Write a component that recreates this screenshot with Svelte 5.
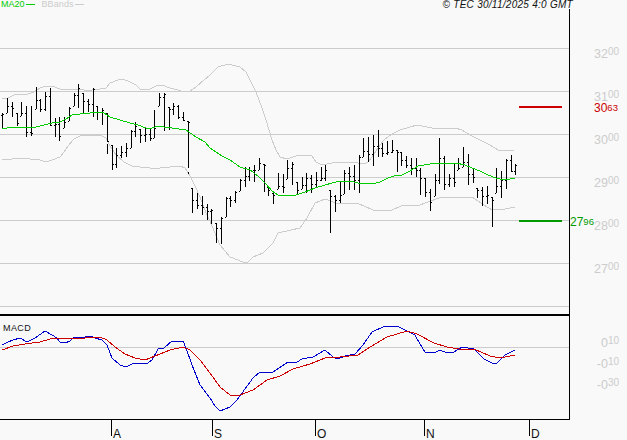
<script>
  // [high, low, close] in chart pixels, open is the previous close
  const bars = [
    [113,128,114],[98,113,106],[102,117,108],[113,126,123],[102,116,113],[106,137,132],[106,136,133],[87,109,100],[99,112,109],[92,111,96],
    [88,126,125],[118,137,124],[117,141,136],[117,128,122],[107,121,108],[93,106,95],[84,108,88],[93,113,101],[99,112,104],[88,117,89],
    [106,120,112],[108,125,110],[113,142,141],[145,170,164],[148,168,155],[146,158,152],[143,157,148],[130,148,131],[122,137,126],[129,143,135],
    [128,142,134],[129,141,138],[110,138,128],[93,106,97],[93,131,94],[107,130,109],[103,115,106],[105,119,117],[112,121,120],[121,168,122],
    [188,213,200],[193,209,205],[196,215,207],[204,220,211],[209,224,210],[223,243,228],[217,244,218],[197,217,198],[196,207,200],[191,203,192],
    [179,191,180],[167,187,176],[167,181,170],[165,182,170],[158,170,163],[164,192,165],[187,196,190],[193,204,195],[173,189,186],[174,193,187],
    [160,179,168],[162,185,164],[182,194,190],[177,189,185],[173,193,178],[175,193,184],[172,188,180],[167,181,178],[165,181,170],[190,233,196],
    [195,212,200],[182,203,195],[170,194,173],[167,190,176],[165,190,180],[155,193,157],[138,157,151],[137,162,154],[135,166,146],[130,157,148],
    [143,157,153],[141,155,152],[140,153,150],[150,172,152],[152,166,160],[156,168,165],[158,175,168],[158,177,170],[168,195,178],[178,197,192],
    [189,211,202],[174,196,180],[138,184,158],[156,190,184],[174,187,178],[164,187,182],[158,170,168],[147,167,162],[154,185,174],[168,183,177],
    [188,198,190],[187,206,196],[186,204,195],[197,227,200],[168,193,186],[171,198,180],[159,189,160],[155,172,171],[164,175,165]
  ];
  // broken-off pieces of stems: [x, top, bottom]
  const stubs = [[107, 144, 154], [188, 172, 174]];

  const priceGrid = [48, 91, 134, 177, 220, 263, 306];
  const priceLabels = [
    ['32', 58], ['31', 101], ['30', 144], ['29', 187], ['28', 230], ['27', 273]
  ];
  const macdLabels = [
    ['0', '10', 347], ['-0', '10', 368], ['-0', '30', 389]
  ];
  const months = [
    ['A', 111], ['S', 212], ['O', 315], ['N', 424], ['D', 529]
  ];

  const upper = '2,99 8,98 14,95 20,94 28,94 34,92 40,88 46,86 52,86 60,89 70,90 78,89 84,90 92,90 100,89 106,88 110,83 118,80 122,79 128,81 136,85 140,89 150,89 158,85 162,85 170,88 178,90 184,92 190,91 196,87 204,80 210,75 218,67 228,64 240,67 246,72 250,80 256,92 262,108 266,120 272,140 276,150 280,157 287,159 296,156 306,155 312,156 316,162 322,165 332,163 340,162 350,162 358,163 364,164 368,162 372,157 378,148 384,140 392,134 400,130 410,127 417,125 432,128 455,128 462,130 470,135 480,140 490,145 498,150 506,151 514,150';
  const lower = '2,159 12,159 20,158 30,159 40,160 46,162 52,160 60,157 64,152 68,146 74,139 80,136 90,135 100,135 106,138 110,146 116,155 124,162 132,166 140,167 150,168 160,168 170,167 180,166 185,168 190,176 196,188 202,202 206,213 210,221 217,238 220,245 230,257 243,262 248,262 253,257 263,253 273,243 278,233 300,228 307,218 315,203 325,199 338,204 357,203 373,210 390,211 403,205 417,206 439,198 460,197 472,197 484,205 492,210 505,209 515,207';
  const ma20 = '2,129 7,128 14,127 20,127 26,127 36,127 44,125 52,123 60,122 66,119 72,115 80,114 90,113 96,112 104,113 110,117 120,120 130,123 138,125 146,128 152,128 158,126 164,127 172,128 186,130 196,137 205,142 210,148 216,152 222,156 230,160 240,167 250,170 258,176 266,184 272,191 278,195 288,195 296,195 305,192 315,188 325,185 332,183 340,181 350,181 358,183 366,183 372,184 380,182 388,178 394,176 402,175 410,171 418,166 430,164 445,163 456,163 465,165 472,168 480,171 488,175 496,178 504,180 510,179 515,178';
  const macd = '2,345 8,342 13,340 20,338 27,342 35,338 45,331 52,335 57,338 60,342 65,343 70,341 74,337 85,337 90,336 95,338 102,340 107,345 112,358 120,365 126,367 134,363 148,363 152,360 158,349 164,348 172,341 183,341 186,348 192,365 200,385 210,398 215,406 220,411 230,407 237,400 253,378 260,372 273,372 282,366 288,362 297,362 302,359 313,357 325,350 333,357 338,359 345,356 355,354 363,345 372,332 385,326 397,326 407,331 415,335 417,339 425,352 434,353 440,350 447,353 454,352 462,347 474,349 484,359 492,363 497,363 505,355 515,350';
  const signal = '2,350 13,346 25,344 40,342 50,339 60,338 75,338 85,338 100,337 107,340 115,347 125,354 135,358 145,360 155,356 170,350 183,347 190,350 200,360 210,373 220,387 230,395 240,395 253,390 267,380 280,376 293,369 310,364 325,358 340,357 358,355 370,347 387,337 407,331 417,334 434,343 447,347 459,349 474,349 490,356 500,358 515,355';

  const barX = (i) => Math.round(2.3 + i * 4.75);
  const opens = bars.map((b, i) => {
    const prev = i ? bars[i - 1][2] : b[0] + 2;
    return Math.min(b[1], Math.max(b[0], prev));
  });
</script>

<div class="page">
  <header class="top">
    <div class="legend">
      <span class="ma">MA20</span><i class="swatch ma-line"></i>
      <span class="bb">BBands</span><i class="swatch bb-line"></i>
    </div>
    <div class="stamp">© TEC 30/11/2025 4:0 GMT</div>
  </header>

  <svg class="chart" width="627" height="431" viewBox="0 9 627 431">
    {#each priceGrid as y}
      <rect class="grid" x="0" {y} width="569" height="1" />
    {/each}
    <rect class="grid" x="0" y="347" width="569" height="1" />

    <polyline class="band" points={upper} />
    <polyline class="band" points={lower} />

    {#each bars as b, i}
      <rect class="bar" x={barX(i)} y={b[0]} width="1" height={b[1] - b[0]} />
      <rect class="bar" x={barX(i) - 1} y={opens[i]} width="1" height="1" />
      <rect class="bar" x={barX(i) + 1} y={b[2]} width="1" height="1" />
    {/each}
    {#each stubs as [x, top, bottom]}
      <rect class="bar" {x} y={top} width="1" height={bottom - top} />
    {/each}

    <polyline class="ma20" points={ma20} />

    <rect class="target-high" x="519" y="106" width="43" height="2" />
    <rect class="target-low" x="519" y="220" width="43" height="2" />

    <rect class="axis" x="0" y="314" width="569" height="2" />
    <rect class="axis" x="0" y="419" width="569" height="1" />
    <rect class="axis" x="569" y="9" width="1" height="411" />

    <polyline class="macd" points={macd} />
    <polyline class="signal" points={signal} />

    {#each priceLabels as [big, y]}
      <text class="scale" x="619" {y} text-anchor="end">{big}<tspan class="minor" dy="-3">00</tspan></text>
    {/each}
    {#each macdLabels as [big, small, y]}
      <text class="scale" x="619" {y} text-anchor="end">{big}<tspan class="minor" dy="-3">{small}</tspan></text>
    {/each}

    <text class="scale hi" x="594" y="112">30<tspan class="minor-2" dy="-1">63</tspan></text>
    <text class="scale lo" x="570" y="226">27<tspan class="minor-2" dy="-1">96</tspan></text>

    <text class="pane" x="3" y="331">MACD</text>

    {#each months as [label, x]}
      <rect class="axis" {x} y="419" width="1" height="17" />
      <text class="month" x={x + 2} y="438">{label}</text>
    {/each}
  </svg>
</div>

<style>
  :global(body) {
    margin: 0;
    background: #f9f9f9;
  }

  .page {
    width: 627px;
    height: 440px;
    background: #f9f9f9;
    overflow: hidden;
    font-family: "Liberation Sans", Arial, sans-serif;
  }

  .top {
    display: flex;
    justify-content: space-between;
    height: 9px;
    line-height: 9px;
    font-size: 9px;
    white-space: nowrap;
  }

  .legend {
    display: flex;
    align-items: center;
    padding-left: 1px;
  }

  .ma {
    color: #00cc00;
  }

  .bb {
    color: #cccccc;
    margin-left: 7px;
    letter-spacing: 0.1px;
  }

  .swatch {
    display: block;
    width: 9px;
    height: 1px;
    margin-left: 1px;
  }

  .ma-line {
    background: #00cc00;
  }

  .bb-line {
    background: #cccccc;
  }

  .stamp {
    padding-right: 54px;
    font-size: 10px;
    font-style: italic;
    letter-spacing: 0.27px;
    color: #111;
  }

  .chart {
    display: block;
  }

  .grid {
    fill: #cccccc;
  }

  .bar,
  .axis {
    fill: #000;
  }

  .bar,
  .axis,
  .grid,
  .target-high,
  .target-low {
    shape-rendering: crispEdges;
  }

  polyline {
    fill: none;
    stroke-width: 1;
    shape-rendering: crispEdges;
  }

  .band {
    stroke: #cccccc;
  }

  .ma20 {
    stroke: #00cc00;
  }

  .macd {
    stroke: #0000cc;
  }

  .signal {
    stroke: #cc0000;
  }

  .target-high {
    fill: #cc0000;
  }

  .target-low {
    fill: #009900;
  }

  .scale {
    font-size: 12.5px;
    fill: #cccccc;
  }

  .minor {
    font-size: 10px;
  }

  .minor-2 {
    font-size: 9.5px;
  }

  .hi {
    font-size: 12px;
    fill: #cc0000;
  }

  .lo {
    font-size: 12px;
    fill: #009900;
  }

  .pane {
    font-size: 9px;
    letter-spacing: 0.4px;
    fill: #111;
  }

  .month {
    font-size: 12px;
    fill: #111;
  }
</style>
